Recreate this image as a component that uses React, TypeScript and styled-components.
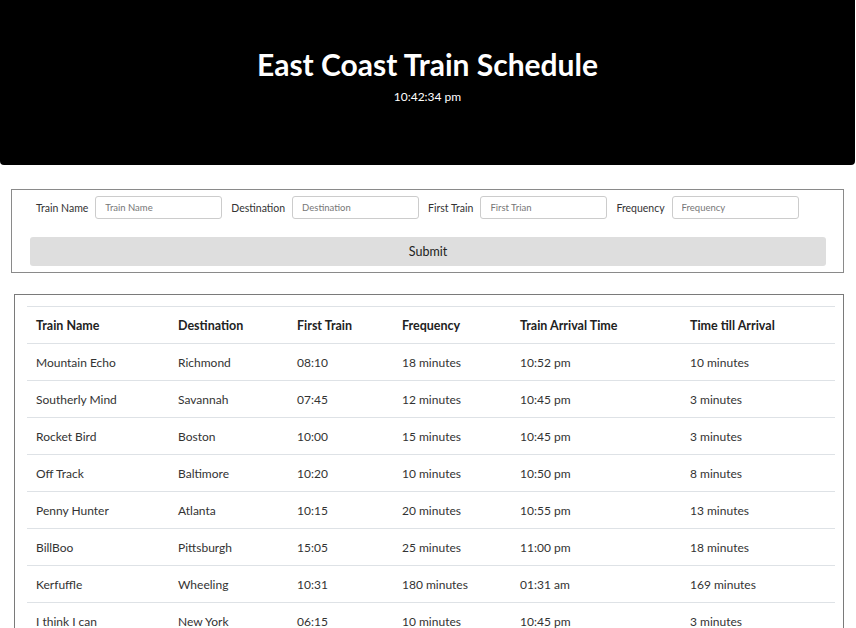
import React from "react";
import styled, { createGlobalStyle } from "styled-components";

const Global = createGlobalStyle`
  html, body { margin: 0; padding: 0; background: #fff; }
  body { font-family: Lato, "Open Sans", sans-serif; color: #212529; }
  * { box-sizing: border-box; }
`;

const Page = styled.div`
  width: 856px;
  display: flex;
  flex-direction: column;
`;

const Jumbo = styled.header`
  height: 165px;
  width: 855px;
  background: #000;
  color: #fff;
  border-radius: 0 0 4px 4px;
  display: flex;
  flex-direction: column;
  align-items: center;
  padding-top: 44px;
`;

const Title = styled.h1`
  margin: 0;
  font-size: 30px;
  font-weight: 700;
  line-height: 40px;
`;

const Clock = styled.div`
  font-size: 12px;
  line-height: 16px;
  margin-top: 5px;
`;

const FormBox = styled.form`
  margin: 24px 12px 0 11px;
  width: 833px;
  border: 1px solid #8a8a8a;
  padding: 6px 17px 6px 18px;
  display: flex;
  flex-direction: column;
  gap: 18px;
`;

const Fields = styled.div`
  display: flex;
  align-items: center;
  padding-left: 6px;
  gap: 9px;
`;

const Field = styled.label`
  display: flex;
  align-items: center;
  gap: 7px;
  font-size: 10.5px;
  color: #333;
  white-space: nowrap;
  flex-shrink: 0;
`;

const Input = styled.input`
  width: 127px;
  height: 23px;
  flex-shrink: 0;
  border: 1px solid #ccc;
  border-radius: 3px;
  padding: 0 9px;
  font-family: inherit;
  font-size: 9.5px;
  &::placeholder { color: #777; }
`;

const Submit = styled.button`
  height: 29px;
  width: 100%;
  border: none;
  border-radius: 3px;
  background: #dedede;
  font-family: inherit;
  font-size: 12.5px;
  color: #222;
`;

const TableBox = styled.section`
  margin: 21px 12px 0 14px;
  width: 830px;
  border: 1px solid #7a7a7a;
  border-bottom: none;
  padding: 11px 8px 0 12px;
`;

const Table = styled.table`
  width: 808px;
  border-collapse: collapse;
  table-layout: fixed;
  font-size: 12px;
  color: #333;
`;

const Th = styled.th<{ $w: number }>`
  width: ${(p) => p.$w}px;
  text-align: left;
  font-weight: 700;
  font-size: 12.5px;
  padding: 0 9px;
  height: 37px;
  border-top: 1px solid #dee2e6;
  border-bottom: 1px solid #dee2e6;
  color: #222;
`;

const Td = styled.td`
  padding: 0 9px;
  height: 37px;
  border-bottom: 1px solid #dee2e6;
  white-space: nowrap;
`;

const cols = [
  { name: "Train Name", w: 142 },
  { name: "Destination", w: 119 },
  { name: "First Train", w: 105 },
  { name: "Frequency", w: 118 },
  { name: "Train Arrival Time", w: 170 },
  { name: "Time till Arrival", w: 154 },
];

const rows = [
  ["Mountain Echo", "Richmond", "08:10", "18 minutes", "10:52 pm", "10 minutes"],
  ["Southerly Mind", "Savannah", "07:45", "12 minutes", "10:45 pm", "3 minutes"],
  ["Rocket Bird", "Boston", "10:00", "15 minutes", "10:45 pm", "3 minutes"],
  ["Off Track", "Baltimore", "10:20", "10 minutes", "10:50 pm", "8 minutes"],
  ["Penny Hunter", "Atlanta", "10:15", "20 minutes", "10:55 pm", "13 minutes"],
  ["BillBoo", "Pittsburgh", "15:05", "25 minutes", "11:00 pm", "18 minutes"],
  ["Kerfuffle", "Wheeling", "10:31", "180 minutes", "01:31 am", "169 minutes"],
  ["I think I can", "New York", "06:15", "10 minutes", "10:45 pm", "3 minutes"],
];

export default function App() {
  return (
    <Page>
      <Global />
      <Jumbo>
        <Title>East Coast Train Schedule</Title>
        <Clock>10:42:34 pm</Clock>
      </Jumbo>
      <FormBox onSubmit={(e) => e.preventDefault()}>
        <Fields>
          <Field>Train Name<Input placeholder="Train Name" /></Field>
          <Field>Destination<Input placeholder="Destination" /></Field>
          <Field>First Train<Input placeholder="First Trian" /></Field>
          <Field>Frequency<Input placeholder="Frequency" /></Field>
        </Fields>
        <Submit type="submit">Submit</Submit>
      </FormBox>
      <TableBox>
        <Table>
          <thead>
            <tr>
              {cols.map((c) => (
                <Th key={c.name} $w={c.w}>{c.name}</Th>
              ))}
            </tr>
          </thead>
          <tbody>
            {rows.map((r) => (
              <tr key={r[0]}>
                {r.map((v, i) => (
                  <Td key={i}>{v}</Td>
                ))}
              </tr>
            ))}
          </tbody>
        </Table>
      </TableBox>
    </Page>
  );
}
